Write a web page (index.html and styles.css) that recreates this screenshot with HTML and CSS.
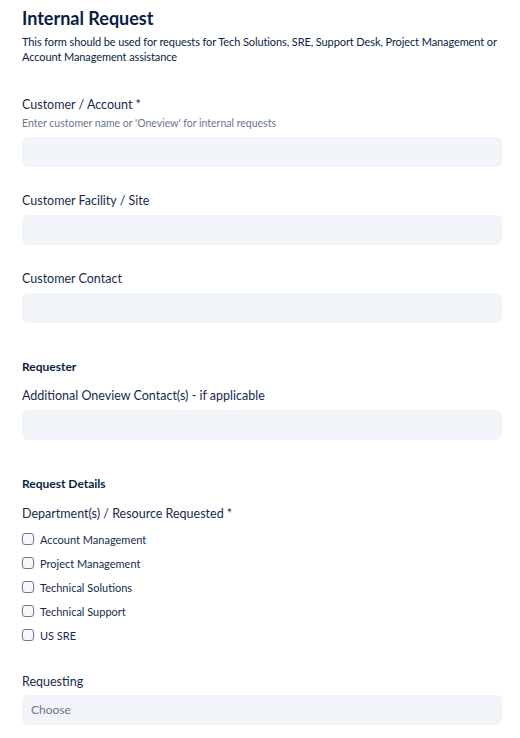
FILE: index.html
```html
<!DOCTYPE html>
<html lang="en">
<head>
    <meta charset="UTF-8">
    <meta name="viewport" content="width=device-width, initial-scale=1.0">
    <title>Internal Request</title>
    <link rel="stylesheet" href="styles.css">
</head>
<body>
    <div class="form">
        <h1>Internal Request</h1>
        <p class="intro">This form should be used for requests for Tech Solutions, SRE, Support Desk, Project Management or Account Management assistance</p>

        <div class="field first">
            <label class="label">Customer / Account *</label>
            <div class="hint">Enter customer name or 'Oneview' for internal requests</div>
            <div class="input"></div>
        </div>

        <div class="field">
            <label class="label">Customer Facility / Site</label>
            <div class="input"></div>
        </div>

        <div class="field">
            <label class="label">Customer Contact</label>
            <div class="input"></div>
        </div>

        <h2 class="section">Requester</h2>
        <div class="field tight">
            <label class="label">Additional Oneview Contact(s) - if applicable</label>
            <div class="input"></div>
        </div>

        <h2 class="section">Request Details</h2>
        <div class="field tight departments">
            <label class="label">Department(s) / Resource Requested *</label>
            <div class="checks">
                <label class="check"><span class="box"></span>Account Management</label>
                <label class="check"><span class="box"></span>Project Management</label>
                <label class="check"><span class="box"></span>Technical Solutions</label>
                <label class="check"><span class="box"></span>Technical Support</label>
                <label class="check"><span class="box"></span>US SRE</label>
            </div>
        </div>

        <div class="field requesting">
            <label class="label">Requesting</label>
            <div class="input select">Choose</div>
        </div>
    </div>
</body>
</html>
```

FILE: styles.css
```css
body {
    font-family: 'Lato', 'Open Sans', sans-serif;
    margin: 0;
    background: #fff;
    color: #172b4d;
}

.form {
    padding: 6px 18px 0 22px;
}

h1 {
    font-size: 18px;
    font-weight: 700;
    line-height: 24px;
    margin: 0;
    color: #091e42;
}

.intro {
    font-size: 11px;
    line-height: 15px;
    letter-spacing: -0.1px;
    margin: 4px 0 0;
    color: #091e42;
}

.field {
    margin-top: 23px;
}

.field.first {
    margin-top: 30px;
}

.field.tight {
    margin-top: 8px;
}

.field.departments {
    margin-top: 9px;
}

.label {
    display: block;
    padding-top: 1px;
    font-size: 12.5px;
    line-height: 20px;
    color: #172b4d;
}

.hint {
    font-size: 10.5px;
    line-height: 16px;
    color: #6b778c;
    margin-bottom: 6px;
}

.field .label + .input {
    margin-top: 4px;
}

.input {
    height: 30px;
    background: #f1f4f9;
    border-radius: 6px;
}

.select {
    font-size: 12px;
    line-height: 30px;
    padding-left: 9px;
    color: #6b778c;
}

.section {
    font-size: 12px;
    font-weight: 700;
    line-height: 20px;
    margin: 34px 0 0;
    color: #091e42;
}

.checks {
    margin-top: 3px;
}

.check {
    display: flex;
    align-items: center;
    height: 24px;
    font-size: 11px;
    color: #172b4d;
}

.box {
    width: 10px;
    height: 10px;
    border: 1px solid #6b778c;
    border-radius: 3px;
    background: #f7f8fa;
    margin-right: 6px;
}

.field.requesting {
    margin-top: 24px;
}

.requesting .label + .input {
    margin-top: 3px;
}
```
